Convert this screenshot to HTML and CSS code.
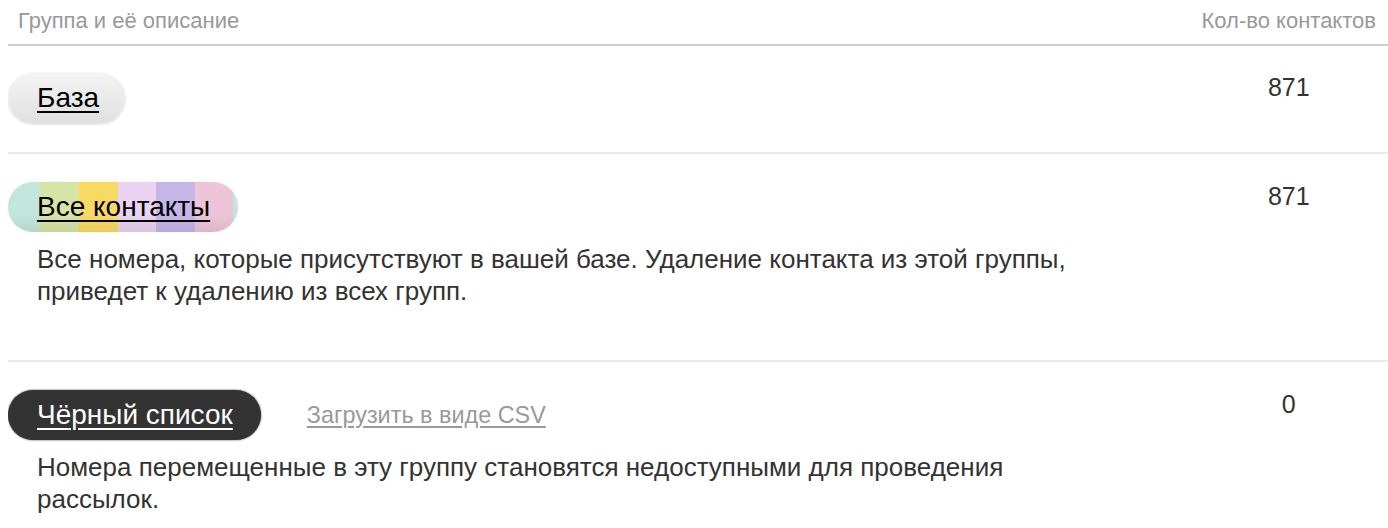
FILE: index.html
```html
<!DOCTYPE html>
<html lang="ru">
<head>
<meta charset="utf-8">
<title>Группы</title>
<link rel="stylesheet" href="styles.css">
</head>
<body>
<table class="groups">
  <thead>
    <tr>
      <th class="col-name">Группа и её описание</th>
      <th class="col-count">Кол-во контактов</th>
    </tr>
  </thead>
  <tbody>
    <tr>
      <td class="cell-name">
        <div class="group-head"><a href="#" class="pill pill-base">База</a></div>
      </td>
      <td class="cell-count">871</td>
    </tr>
    <tr>
      <td class="cell-name">
        <div class="group-head"><a href="#" class="pill pill-all">Все контакты</a></div>
        <p class="desc">Все номера, которые присутствуют в вашей базе. Удаление контакта из этой группы, приведет к удалению из всех групп.</p>
      </td>
      <td class="cell-count">871</td>
    </tr>
    <tr>
      <td class="cell-name">
        <div class="group-head"><a href="#" class="pill pill-black">Чёрный список</a><a href="#" class="csv">Загрузить в виде CSV</a></div>
        <p class="desc">Номера перемещенные в эту группу становятся недоступными для проведения рассылок.</p>
      </td>
      <td class="cell-count">0</td>
    </tr>
  </tbody>
</table>
</body>
</html>
```

FILE: styles.css
```css
body {
  margin: 0 0 0 8px;
  font-family: "Liberation Sans", Arial, Helvetica, sans-serif;
  color: #333;
  background: #fff;
}

.groups {
  width: 1380px;
  border-collapse: collapse;
}

.groups th {
  font-weight: normal;
  font-size: 22px;
  line-height: 25px;
  color: #999;
  padding: 8px 0 11px;
  border-bottom: 2px solid #ccc;
  vertical-align: middle;
  white-space: nowrap;
}

.groups th.col-name {
  text-align: left;
  padding-left: 10px;
}

.groups th.col-count {
  text-align: center;
  width: 173px;
  padding-right: 12px;
}

.groups tbody tr + tr td {
  border-top: 2px solid #ebebeb;
}

.cell-name {
  padding: 28px 0 29px;
  vertical-align: top;
}

.groups tbody tr:first-child td {
  padding-top: 27px;
}

.cell-count {
  vertical-align: top;
  text-align: center;
  font-size: 25px;
  line-height: 29px;
  padding: 28px 12px 0 0;
  color: #333;
}

.group-head {
  display: flex;
  align-items: center;
  gap: 46px;
}

.pill {
  display: inline-flex;
  align-items: center;
  height: 50px;
  box-sizing: border-box;
  padding: 0 28px 0 29px;
  border-radius: 25px;
  font-size: 28px;
  color: #000;
  text-decoration: underline;
  text-decoration-thickness: 2px;
  text-underline-offset: 4px;
  white-space: nowrap;
}

.pill-base {
  padding-right: 26px;
  background: linear-gradient(#f4f4f4, #e0e0e0);
  box-shadow: 0 1px 3px rgba(0, 0, 0, 0.18);
}

.pill-all {
  background:
    linear-gradient(rgba(0, 0, 0, 0) 65%, rgba(0, 0, 0, 0.07)),
    linear-gradient(to right,
      #c3e6dc 0 32px,
      #d6e4a6 32px 71px,
      #f8da63 71px 110px,
      #e9d3f0 110px 148px,
      #c5b6e8 148px 187px,
      #edc4d8 187px 225px,
      #c3e6dc 225px);
  box-shadow: 0 0 2px rgba(0, 0, 0, 0.08);
}

.pill-black {
  background: #333;
  color: #fff;
  box-shadow: 0 0 2px #333;
}

.csv {
  font-size: 23.4px;
  color: #999;
  text-decoration: underline;
  text-underline-offset: 3px;
  white-space: nowrap;
}

.desc {
  margin: 11px 0 24px 29px;
  max-width: 1050px;
  font-size: 26px;
  line-height: 32px;
  color: #333;
}
```
